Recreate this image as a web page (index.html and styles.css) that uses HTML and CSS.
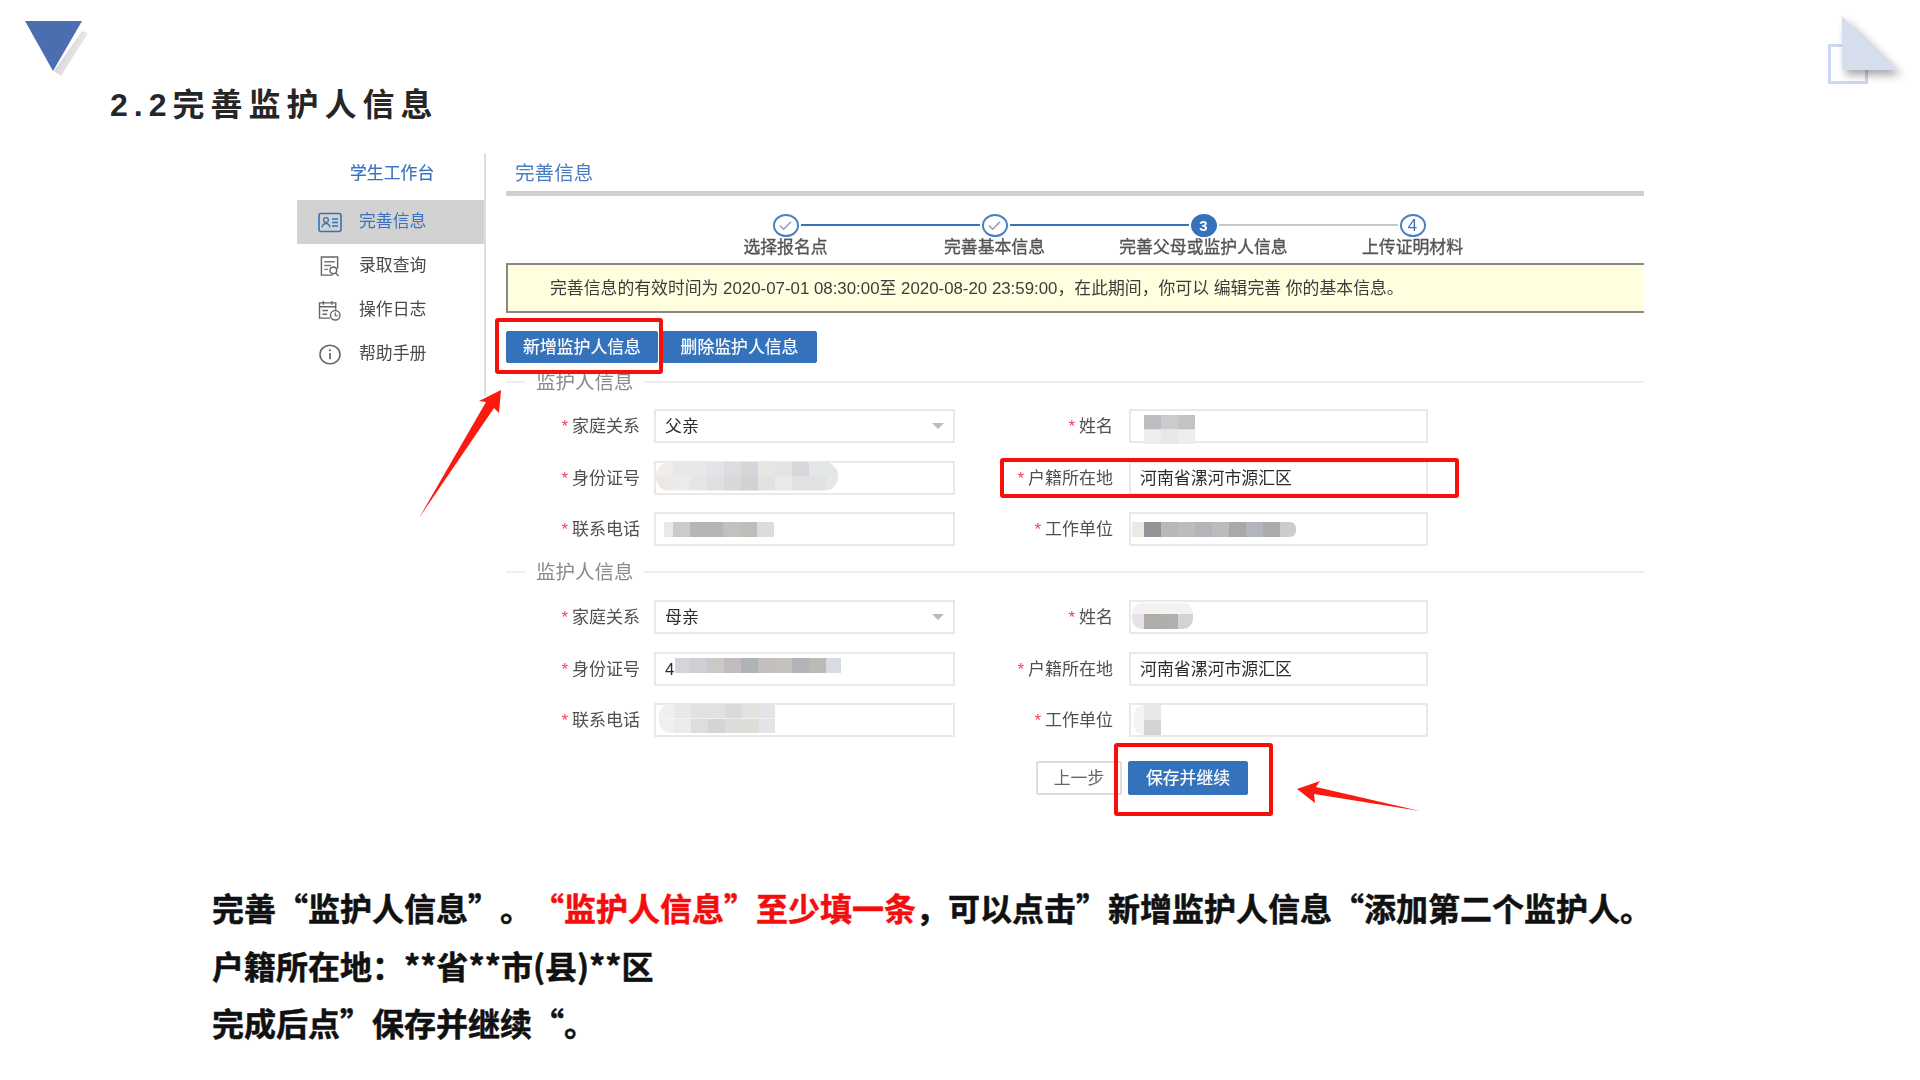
FILE: index.html
```html
<!DOCTYPE html>
<html lang="zh-CN">
<head>
<meta charset="utf-8">
<title>2.2完善监护人信息</title>
<link rel="stylesheet" href="styles.css">
</head>
<body>
<div class="slide">
  <svg class="deco deco-left" viewBox="0 0 100 90">
    <defs>
      <linearGradient id="fold" x1="0" y1="0" x2="1" y2="0.6">
        <stop offset="0" stop-color="#c4c4c4"/>
        <stop offset="1" stop-color="#f4f4f4"/>
      </linearGradient>
    </defs>
    <polygon points="82,31 88,33 61,76 54,71" fill="url(#fold)"/>
    <polygon points="25,21 82,21 53,71" fill="#4a6eb0"/>
  </svg>
  <svg class="deco deco-right" viewBox="0 0 100 90">
    <rect x="9.5" y="35.5" width="37" height="37" fill="none" stroke="#ccd8ee" stroke-width="3"/>
    <polygon class="deco-shadow" points="22,6 22,60 77,60" fill="#d6deed"/>
  </svg>

  <h1 class="slide-title">2.2完善监护人信息</h1>

  <div class="app">
    <aside class="sidebar">
      <div class="sidebar-title">学生工作台</div>
      <div class="nav-item nav-active">
        <svg class="nav-icon" viewBox="0 0 24 20"><rect x="1" y="1" width="22" height="18" rx="2" fill="none" stroke="#3572bc" stroke-width="1.6"/><circle cx="8" cy="7.5" r="2.4" fill="none" stroke="#3572bc" stroke-width="1.3"/><path d="M4 15c.5-3 2-4 4-4s3.500 1 4 4" fill="none" stroke="#3572bc" stroke-width="1.300"/><path d="M14 6.500h6M14 10h6M14 13.500h6" stroke="#3572bc" stroke-width="1.300"/></svg>
        <span>完善信息</span>
      </div>
      <div class="nav-item">
        <svg class="nav-icon" viewBox="0 0 24 22"><path d="M15 20H3V1h17v12" fill="none" stroke="#666" stroke-width="1.500"/><path d="M6 6h11M6 10h7M6 14h4" stroke="#777" stroke-width="1.500"/><circle cx="15.500" cy="15" r="3.500" fill="none" stroke="#666" stroke-width="1.500"/><path d="M18 18l3 3" stroke="#666" stroke-width="1.500"/></svg>
        <span>录取查询</span>
      </div>
      <div class="nav-item">
        <svg class="nav-icon" viewBox="0 0 24 22"><path d="M12 19H1V3h17v7" fill="none" stroke="#666" stroke-width="1.500"/><path d="M5 1v4M14 1v4M1 7h17M4 11h6M4 15h5" stroke="#666" stroke-width="1.500"/><circle cx="17.500" cy="16" r="5" fill="#fff" stroke="#666" stroke-width="1.500"/><path d="M17.500 13v3.500h3" fill="none" stroke="#666" stroke-width="1.300"/></svg>
        <span>操作日志</span>
      </div>
      <div class="nav-item">
        <svg class="nav-icon" viewBox="0 0 24 22"><ellipse cx="12" cy="11" rx="10.500" ry="9.800" fill="none" stroke="#666" stroke-width="1.600"/><path d="M12 9.500V16" stroke="#666" stroke-width="1.800"/><circle cx="12" cy="6.500" r="1.100" fill="#666"/></svg>
        <span>帮助手册</span>
      </div>
    </aside>

    <main class="content">
      <div class="content-title">完善信息</div>

      <div class="steps">
        <div class="step step-done">
          <span class="step-dot"><svg class="step-check" viewBox="0 0 16 12"><path d="M2 6l4 4 8-8" fill="none" stroke="#8a9cc4" stroke-width="1.500"/></svg></span>
          <span class="step-label">选择报名点</span>
        </div>
        <div class="step step-done">
          <span class="step-dot"><svg class="step-check" viewBox="0 0 16 12"><path d="M2 6l4 4 8-8" fill="none" stroke="#8a9cc4" stroke-width="1.500"/></svg></span>
          <span class="step-label">完善基本信息</span>
        </div>
        <div class="step step-current">
          <span class="step-dot">3</span>
          <span class="step-label">完善父母或监护人信息</span>
        </div>
        <div class="step step-last">
          <span class="step-dot">4</span>
          <span class="step-label">上传证明材料</span>
        </div>
      </div>

      <div class="notice"><span>完善信息的有效时间为 2020-07-01 08:30:00至 2020-08-20 23:59:00，在此期间，你可以 编辑完善 你的基本信息。</span></div>

      <div class="actions">
        <button class="btn btn-primary btn-add">新增监护人信息</button>
        <button class="btn btn-primary btn-del">删除监护人信息</button>
      </div>

      <div class="legend legend-first"><span>监护人信息</span></div>
      <div class="form">
        <div class="field"><label class="label"><i>*</i>家庭关系</label><div class="input select">父亲</div></div>
        <div class="field field-r"><label class="label"><i>*</i>姓名</label><div class="input"><span class="mosaic m-name1"></span></div></div>
        <div class="field"><label class="label"><i>*</i>身份证号</label><div class="input"><span class="mosaic m-id1"></span></div></div>
        <div class="field field-r"><label class="label"><i>*</i>户籍所在地</label><div class="input">河南省漯河市源汇区</div></div>
        <div class="field"><label class="label"><i>*</i>联系电话</label><div class="input"><span class="mosaic m-tel1"></span></div></div>
        <div class="field field-r"><label class="label"><i>*</i>工作单位</label><div class="input"><span class="mosaic m-work1"></span></div></div>
      </div>

      <div class="legend legend-second"><span>监护人信息</span></div>
      <div class="form form-second">
        <div class="field"><label class="label"><i>*</i>家庭关系</label><div class="input select">母亲</div></div>
        <div class="field field-r"><label class="label"><i>*</i>姓名</label><div class="input"><span class="mosaic m-name2"></span></div></div>
        <div class="field"><label class="label"><i>*</i>身份证号</label><div class="input">4<span class="mosaic m-id2"></span></div></div>
        <div class="field field-r"><label class="label"><i>*</i>户籍所在地</label><div class="input">河南省漯河市源汇区</div></div>
        <div class="field"><label class="label"><i>*</i>联系电话</label><div class="input"><span class="mosaic m-tel2"></span></div></div>
        <div class="field field-r"><label class="label"><i>*</i>工作单位</label><div class="input"><span class="mosaic m-work2"></span></div></div>
      </div>

      <div class="form-actions">
        <button class="btn btn-plain">上一步</button>
        <button class="btn btn-primary btn-save">保存并继续</button>
      </div>
    </main>
  </div>

  <div class="caption">
    <p>完善“监护人信息”。<em>“监护人信息”至少填一条</em>，可以点击”新增监护人信息“添加第二个监护人。</p>
    <p>户籍所在地：**省**市(县)**区</p>
    <p>完成后点”保存并继续“。</p>
  </div>

  <div class="mark mark-add"></div>
  <div class="mark mark-addr"></div>
  <div class="mark mark-save"></div>
  <svg class="arrow arrow-up" viewBox="415 385 90 135"><polygon points="419,518 486,402 479,401 501,390 499,413 494,408" fill="#fb1a10"/></svg>
  <svg class="arrow arrow-left" viewBox="1295 778 125 36"><polygon points="1297,789 1320,781 1316,787 1420,811 1314,794 1315,803" fill="#fb1a10"/></svg>
</div>
</body>
</html>
```
FILE: styles.css
```css
* { box-sizing: border-box; }
html, body { margin: 0; padding: 0; background: #fff; }
body { font-family: "Liberation Sans", "Noto Sans CJK SC", sans-serif; }

.slide {
  position: relative;
  width: 1920px;
  height: 1080px;
  overflow: hidden;
  background: #fff;
}

/* decorations */
.deco { position: absolute; top: 0; width: 100px; height: 90px; }
.deco-left { left: 0; }
.deco-right { left: 1820px; top: 10px; }
.deco-shadow { filter: drop-shadow(4px 5px 4px rgba(0, 0, 0, .35)); }

.slide-title {
  margin: 0;
  padding: 85px 0 0 110px;
  font-size: 32px;
  line-height: 40px;
  font-weight: 700;
  letter-spacing: 6px;
  color: #262626;
}

/* embedded screenshot */
.app {
  display: flex;
  align-items: flex-start;
  width: 1347px;
  margin: 28px 0 0 297px;
  filter: blur(.45px);
  font-size: 16.85px;
  color: #4a4a4a;
}

.sidebar {
  flex: none;
  width: 189px;
  height: 243px;
  border-right: 2px solid #ddd;
}
.sidebar-title {
  height: 47px;
  padding: 9px 0 0 53px;
  line-height: 24px;
  color: #3a72c0;
  -webkit-text-stroke: .2px #3a72c0;
}
.nav-item {
  display: flex;
  align-items: center;
  gap: 17px;
  height: 44px;
  padding-left: 21px;
}
.nav-item span { padding-bottom: 5px; }
.nav-active { background: #d2d2d2; color: #3a72c0; }
.nav-icon { flex: none; width: 24px; height: 21px; }

.content { flex: none; width: 1138px; margin-left: 20px; }
.content-title {
  height: 43px;
  padding: 7px 0 0 9px;
  border-bottom: 5px solid #cfcfcf;
  font-size: 19.6px;
  line-height: 26px;
  color: #4a7dc0;
}

.steps {
  display: grid;
  grid-template-columns: repeat(4, 209px);
  height: 67px;
  padding: 18px 0 0 175px;
}
.step {
  position: relative;
  display: flex;
  flex-direction: column;
  align-items: center;
}
.step::after {
  content: "";
  position: absolute;
  top: 10px;
  left: calc(50% + 15px);
  width: 179px;
  height: 2px;
  background: #3a72c0;
}
.step-current::after { background: #c8c8c8; }
.step-last::after { display: none; }
.step-dot {
  display: flex;
  align-items: center;
  justify-content: center;
  width: 26px;
  height: 23px;
  border: 2px solid #4a80c4;
  border-radius: 50%;
  font-size: 17px;
  color: #3a72c0;
}
.step-current .step-dot { background: #3572bc; border-color: #3572bc; color: #fff; font-size: 15px; font-weight: 700; }
.step-check { width: 15px; height: 11px; }
.step-label {
  padding-top: 1px;
  line-height: 20px;
  white-space: nowrap;
  color: #555;
  -webkit-text-stroke: .35px #555;
}

.notice {
  display: flex;
  align-items: center;
  height: 50px;
  padding-left: 42px;
  border: 2px solid #8a8a82;
  border-right: 0;
  background: #ffffe0;
  color: #3c3c3c;
  white-space: pre;
}
.notice span { padding-bottom: 4px; }

.actions { display: flex; gap: 4px; margin-top: 18px; }
.btn {
  height: 32px;
  padding: 0 0 4px;
  border: 1px solid #3572bc;
  border-radius: 2px;
  font: inherit;
  color: #fff;
}
.btn-primary { background: #3572bc; -webkit-text-stroke: .2px #fff; }
.btn-add { width: 152px; }
.btn-del { width: 155px; }

.legend {
  display: flex;
  align-items: center;
  gap: 10px;
  height: 20px;
  font-size: 19.5px;
  color: #8b8b8b;
}
.legend-first { margin-top: 9px; }
.legend-second { margin-top: 16px; }
.legend::before, .legend::after {
  content: "";
  height: 2px;
  background: #eee;
}
.legend::before { flex: none; width: 19px; margin-right: 1px; }
.legend::after { flex: 1; }
.legend span { padding-bottom: 3px; white-space: nowrap; }

.form {
  display: grid;
  grid-template-columns: 449px 473px;
  grid-auto-rows: 34px;
  row-gap: 17.5px;
  margin-top: 17px;
}
.form-second { margin-top: 18px; }
.field { display: flex; align-items: stretch; gap: 14px; }
.field-r { gap: 16px; }
.label {
  flex: none;
  display: block;
  width: 134px;
  font-size: 17px;
  line-height: 35px;
  text-align: right;
  white-space: nowrap;
  color: #505050;
}
.field-r .label { width: 158px; }
.label i {
  margin-right: 4px;
  font-style: normal;
  font-size: 17px;
  color: #f2415a;
}
.input {
  position: relative;
  flex: none;
  width: 301px;
  padding-left: 9px;
  border: 2px solid #e9e9e9;
  font-size: 16.9px;
  line-height: 32px;
  color: #2c2c2c;
  white-space: nowrap;
}
.field-r .input { width: 299px; }
.select::after {
  content: "";
  position: absolute;
  top: 12px;
  right: 9px;
  border-left: 6px solid transparent;
  border-right: 6px solid transparent;
  border-top: 6px solid #bbb;
}

/* redaction mosaics, placed over the input they hide */
.mosaic { position: absolute; display: block; background-repeat: no-repeat; }
.m-id1 {
  left: 0; top: -1px; width: 182px; height: 29px;
  border-radius: 14px;
  background-size: 100% 50%;
  background-position: 0 0, 0 100%;
  background-image:
    linear-gradient(90deg, #f2ede9 0 17px, #e8e8ea 17px 51px, #e4e4e8 51px 68px, #dddde0 68px 85px, #d5d6d8 85px 102px, #e6e6e2 102px 119px, #e2e4e4 119px 136px, #d8d8dc 136px 153px, #e2e6e6 153px),
    linear-gradient(90deg, #eee8e4 0 17px, #ebebef 17px 34px, #e5e5e8 34px 51px, #dfdfdf 51px 68px, #d8d8d8 68px 85px, #d0d3d3 85px 102px, #e0e3e0 102px 119px, #e8e9ea 119px 136px, #e0e2e2 136px 170px, #e6e8e8 170px);
}
.m-tel1 {
  left: 8px; top: 8px; width: 110px; height: 15px;
  background-image: linear-gradient(90deg, #e8eaea 0 9px, #cccaca 9px 26px, #b4b7b5 26px 59px, #bfc1c2 59px 76px, #c0bdb9 76px 93px, #d9dddd 93px);
}
.m-id2 {
  left: 19px; top: 4px; width: 166px; height: 15px;
  background-image: linear-gradient(90deg, #d6d4da 0 15px, #d0ced4 15px 32px, #c8cac8 32px 49px, #c0bcc0 49px 66px, #aeb3b6 66px 83px, #c2bfbf 83px 100px, #c5c1bc 100px 117px, #b4b4b6 117px 134px, #bcbab4 134px 151px, #d8dbe2 151px);
}
.m-tel2 {
  left: 3px; top: -1px; width: 116px; height: 29px;
  border-radius: 12px 0 0 12px;
  background-size: 100% 50%;
  background-position: 0 0, 0 100%;
  background-image:
    linear-gradient(90deg, #f0f0f0 0 15px, #e9e8e8 15px 32px, #e0e2e2 32px 66px, #dadadc 66px 83px, #e2e2e0 83px 100px, #e4e4e8 100px),
    linear-gradient(90deg, #f0f0f0 0 15px, #ebebeb 15px 32px, #dcdedc 32px 49px, #d4d4d6 49px 66px, #dcdcd8 66px 100px, #e4e4e8 100px);
}
.m-name1 {
  left: 13px; top: 4px; width: 51px; height: 29px;
  background-size: 100% 50%;
  background-position: 0 0, 0 100%;
  background-image:
    linear-gradient(90deg, #bcbdc0 0 17px, #cccaca 17px 34px, #c2c4c4 34px),
    linear-gradient(90deg, #eee 0 17px, #e8e8e8 17px 34px, #eee 34px);
}
.m-work1 {
  left: 1px; top: 8px; width: 164px; height: 15px;
  border-radius: 0 6px 6px 0;
  background-image: linear-gradient(90deg, #ece8e4 0 12px, #929498 12px 29px, #b8b8b8 29px 46px, #bfbabc 46px 63px, #b2b6ba 63px 80px, #bcbcbc 80px 97px, #a9a9a9 97px 114px, #b2b5ba 114px 131px, #ababab 131px 148px, #ccc 148px);
}
.m-name2 {
  left: 1px; top: 1px; width: 61px; height: 26px;
  border-radius: 10px;
  background-size: 100% 58%, 100% 42%;
  background-position: 0 100%, 0 0;
  background-image:
    linear-gradient(90deg, #e6e2e6 0 12px, #b0aca8 12px 29px, #aeb0ac 29px 46px, #d4d2d6 46px),
    linear-gradient(90deg, #f2f2f2 0 100%);
}
.m-work2 {
  left: 3px; top: 0; width: 27px; height: 30px;
  border-radius: 10px 0 0 10px;
  background-size: 100% 50%;
  background-position: 0 0, 0 100%;
  background-image:
    linear-gradient(90deg, #f4f4f4 0 10px, #e8e8e8 10px),
    linear-gradient(90deg, #f4f4f4 0 10px, #d4d4d6 10px);
}

.form-actions {
  display: flex;
  gap: 6px;
  margin-top: 24px;
  padding-left: 530px;
}
.form-actions .btn { height: 34px; }
.btn-plain { width: 86px; border: 2px solid #ddd; background: #fff; color: #666; }
.btn-save { width: 120px; }

/* instructions */
.caption {
  margin-top: 84px;
  padding-left: 212px;
  font-family: "Noto Sans CJK SC", "Liberation Sans", sans-serif;
  font-size: 32px;
  font-weight: 700;
  -webkit-text-stroke: .5px #111;
  line-height: 57.5px;
  color: #111;
  text-spacing-trim: space-all;
}
.caption p { margin: 0; white-space: nowrap; }
.caption em { font-style: normal; color: #f50d0d; -webkit-text-stroke: .5px #f50d0d; }

/* red annotations over the screenshot */
.mark {
  position: absolute;
  border: 4px solid #f5100a;
  border-radius: 3px;
}
.mark-add { left: 495px; top: 318px; width: 168px; height: 56px; }
.mark-addr { left: 1000px; top: 458px; width: 459px; height: 40px; }
.mark-save { left: 1114px; top: 743px; width: 159px; height: 73px; }
.arrow { position: absolute; }
.arrow-up { left: 415px; top: 385px; width: 90px; height: 135px; }
.arrow-left { left: 1295px; top: 778px; width: 125px; height: 36px; }
```
